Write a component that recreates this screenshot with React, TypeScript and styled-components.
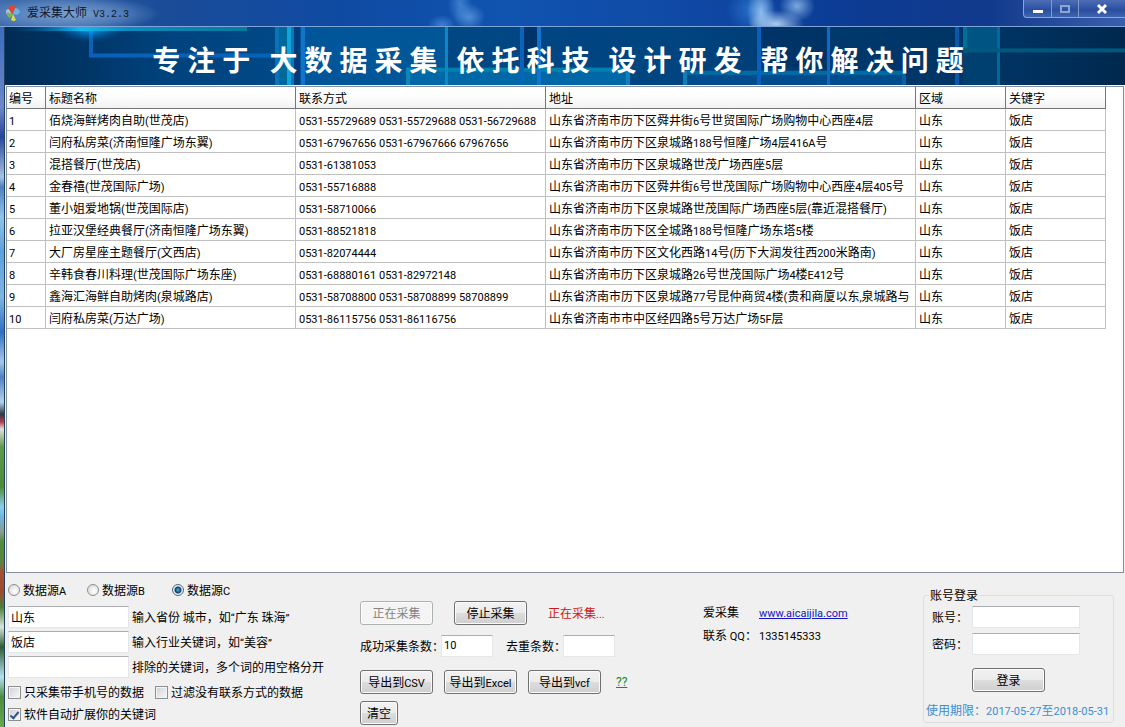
import React from "react";
import styled, { createGlobalStyle, css } from "styled-components";

const GlobalStyle = createGlobalStyle`
  *, *::before, *::after { box-sizing: border-box; }
  body { margin: 0; background: #f0f0f0; }
  body, button, input {
    font-family: "Noto Sans CJK SC", sans-serif;
    font-size: 12px;
    line-height: 18px;
    color: #000;
  }
`;

/* ---------- shared pieces ---------- */

const LatinRun = styled.span`
  font-family: Roboto, "Noto Sans CJK SC", sans-serif;
  font-size: 11px;
  line-height: 1;
`;

/* Sets digits and Latin letters in the smaller UI face, Chinese in the main one. */
function Mixed({ children }: { children: string }) {
  const runs = children.split(/([\x20-\x7e“”…]+)/).filter(Boolean);
  return (
    <>
      {runs.map((run, i) =>
        /^[\x20-\x7e“”…]/.test(run) ? <LatinRun key={i}>{run}</LatinRun> : run
      )}
    </>
  );
}

const Button = styled.button<{ $narrow?: boolean }>`
  width: ${(p) => (p.$narrow ? 38 : 73)}px;
  height: 24px;
  padding: 0;
  white-space: nowrap;
  border: 1px solid #707070;
  border-radius: 3px;
  box-shadow: inset 0 0 0 1px #fbfbfb;
  background: linear-gradient(#f2f2f2 0%, #ebebeb 49%, #dddddd 50%, #cfcfcf 100%);
  &:disabled {
    color: #838383;
    border-color: #adb2b5;
    background: #f4f4f4;
  }
`;

const TextBox = styled.input<{ $width: number }>`
  width: ${(p) => p.$width}px;
  height: 22px;
  padding: 0 2px 2px;
  background: #fff;
  border: 1px solid #e3e7ea;
  border-top-color: #abadb3;
  outline: none;
`;

const CountBox = styled(TextBox)`
  font-family: Roboto, sans-serif;
  font-size: 11px;
`;

/* ---------- title bar ---------- */

const Window = styled.div`
  display: flex;
  flex-direction: column;
  min-height: 100vh;
`;

const TitleBar = styled.header`
  display: flex;
  align-items: flex-start;
  justify-content: space-between;
  height: 27px;
  padding-left: 5px;
  border-bottom: 1px solid #7ea4d8;
  background:
    radial-gradient(ellipse 90px 18px at 70px 14px, rgba(150, 180, 220, 0.75), rgba(120, 160, 210, 0.5) 60%, transparent),
    radial-gradient(ellipse 12px 20px at 460px 4px, rgba(100, 165, 235, 0.55), transparent),
    radial-gradient(ellipse 16px 14px at 469px 17px, rgba(120, 180, 240, 0.6), transparent),
    radial-gradient(ellipse 14px 10px at 442px 25px, rgba(90, 160, 235, 0.6), transparent),
    radial-gradient(ellipse 28px 14px at 776px 24px, rgba(190, 220, 250, 0.9), transparent),
    radial-gradient(ellipse 14px 26px at 761px 12px, rgba(160, 205, 245, 0.85), transparent),
    radial-gradient(ellipse 18px 16px at 797px 6px, rgba(150, 195, 240, 0.8), transparent),
    radial-gradient(ellipse 26px 24px at 752px 10px, rgba(50, 130, 220, 0.7), transparent),
    linear-gradient(90deg, #3f6cab, #1b4c98 14%, #0f4aa2 30%, #1054b0 45%, #0f48a4 62%, #0c3c94 75%, #123a8c 88%, #3a5fae);
`;

const Caption = styled.h1`
  display: flex;
  align-items: center;
  gap: 6px;
  height: 26px;
  margin: 0;
  font-size: 12px;
  font-weight: 400;
  color: #0c1830;
`;

const Version = styled.span`
  font-family: "Liberation Mono", monospace;
  font-size: 10px;
`;

const WindowButtons = styled.div`
  display: flex;
  height: 18px;
  border: 1px solid #8ba5d6;
  border-width: 0 0 1px 1px;
  border-radius: 0 0 0 4px;
  background: linear-gradient(#4d6cb4, #2f54a4 50%, #274c9c 51%, #3f64b0);
`;

const WindowButton = styled.button<{ $wide?: boolean }>`
  display: grid;
  place-items: center;
  width: ${(p) => (p.$wide ? 47 : 27)}px;
  height: 17px;
  padding: 0;
  border: 0;
  background: none;
  & + & {
    border-left: 1px solid #7f99cc;
  }
`;

function AppIcon() {
  return (
    <svg width="16" height="18" viewBox="0 0 16 18" aria-hidden="true">
      <circle cx="4" cy="8" r="3" fill="#a9c3e0" />
      <circle cx="12" cy="11" r="4" fill="#4f86c8" />
      <path d="M7 10 L3 4 Q4 1 8 1 Q11 2 10 5 Z" fill="#d84a35" />
      <path d="M8 10 L10 4 Q14 4 15 8 Q14 10 12 11 Z" fill="#6fb1e0" />
      <path d="M8 10 L2 8 Q1 12 5 14 Z" fill="#7cb84c" />
      <path d="M8 10 L6 16 Q9 18 11 16 Z" fill="#e6d648" />
    </svg>
  );
}

/* ---------- banner ---------- */

const Client = styled.main`
  flex: 1;
  display: flex;
  flex-direction: column;
  border-left: 5px solid transparent;
  background:
    linear-gradient(#f0f0f0, #f0f0f0) padding-box,
    linear-gradient(90deg, transparent 4px, #22405f 4px, #22405f 5px, transparent 5px) border-box,
    linear-gradient(#3a6cc0 0, #6f86c8 80px, #27459c 110px, #a6c4e2 150px, #4d80c0 160px, #8fc4ea 190px, #5ea0dc 225px, #7fb4e4 270px, #2f6fc0 305px, #a8c8ea 335px, #4f80c4 350px, #b4d2ea 375px, #283c48 387px, #b83c48 395px, #e0e0e0 402px, #5f9a48 420px, #4c8c34 460px, #8ccdf0 480px, #6fb4e0 490px, #8a9c90 505px, #4f8c3c 515px, #5a8440 535px, #a85030 545px, #9c4a34 565px, #4c7c38 580px, #d8e4dc 600px, #2c5c30 620px, #b8e0ec 650px, #4c8c3c 670px, #6aa84c 100%) border-box;
`;

const Banner = styled.div`
  position: relative;
  height: 58px;
  overflow: hidden;
  background: #003a70;
`;

const BannerArt = styled.svg`
  position: absolute;
  inset: 0;
  width: 100%;
  height: 100%;
`;

const Slogan = styled.p`
  position: relative;
  display: flex;
  justify-content: center;
  gap: 19px;
  margin: 0;
  padding: 4px 14px 0 0;
  font-size: 28px;
  font-weight: 700;
  line-height: 57px;
  white-space: nowrap;
  color: #fff;
`;

const Phrase = styled.span`
  display: flex;
  gap: 7px;
`;

const slogan = ["专注于", "大数据采集", "依托科技", "设计研发", "帮你解决问题"];

function Artwork() {
  return (
    <BannerArt viewBox="0 0 1120 57" preserveAspectRatio="none" aria-hidden="true">
      <defs>
        <linearGradient id="base" x1="0" x2="1" y1="0" y2="0">
          <stop offset="0" stopColor="#002c55" />
          <stop offset="0.05" stopColor="#003260" />
          <stop offset="0.14" stopColor="#00427c" />
          <stop offset="0.25" stopColor="#004a88" />
          <stop offset="0.38" stopColor="#004884" />
          <stop offset="0.6" stopColor="#004480" />
          <stop offset="0.75" stopColor="#00386c" />
          <stop offset="0.9" stopColor="#003362" />
          <stop offset="1" stopColor="#00284e" />
        </linearGradient>
        <linearGradient id="topBar" x1="0" x2="1" y1="0" y2="0">
          <stop offset="0" stopColor="#0060b0" stopOpacity="0" />
          <stop offset="0.3" stopColor="#14b8f0" />
          <stop offset="0.5" stopColor="#0b8cc0" />
          <stop offset="1" stopColor="#067a9c" />
        </linearGradient>
        <radialGradient id="flare">
          <stop offset="0" stopColor="#2fe0ff" />
          <stop offset="0.3" stopColor="#0a9cf0" stopOpacity="0.7" />
          <stop offset="1" stopColor="#0060b0" stopOpacity="0" />
        </radialGradient>
      </defs>
      <rect width="1120" height="57" fill="url(#base)" />
      <rect x="273" width="169" height="57" fill="#005a9c" opacity="0.8" />
      <path d="M86 1V28H270" fill="none" stroke="#0a62b8" strokeWidth="4" />
      <ellipse cx="85" cy="1" rx="36" ry="14" fill="url(#flare)" />
      <rect x="5" width="237" height="4" fill="url(#topBar)" />
      <rect x="270" width="4" height="57" fill="#0b72b8" />
      <rect x="274" width="8" height="57" fill="#00699c" />
      <rect x="282" width="4" height="57" fill="#10a4dc" />
      <rect x="286" width="3" height="57" fill="#0a78b4" />
      <rect x="289" width="6" height="57" fill="#003c7c" />
      <rect x="296" width="4" height="57" fill="#1074cc" />
      <rect x="401" y="40" width="224" height="17" fill="#0068a6" />
      <rect x="401" y="40" width="224" height="4" fill="#0080ac" />
      <rect x="401" y="40" width="4" height="17" fill="#0a88b4" />
      <rect x="440" width="3" height="57" fill="#0c88c4" />
      <rect x="515" width="4" height="57" fill="#0a64bc" />
      <rect x="519" width="13" height="40" fill="#003468" />
      <rect x="532" width="4" height="57" fill="#1074d0" />
      <rect x="621" y="44" width="4" height="13" fill="#1080c0" />
      <rect x="678" y="43" width="222" height="14" fill="#004c8c" />
      <rect x="678" y="43" width="222" height="4" fill="#006ca4" />
      <rect x="678" y="43" width="4" height="14" fill="#0c80b8" />
      <rect x="752" width="4" height="57" fill="#0a60bc" />
      <rect x="756" width="65" height="40" fill="#002c5c" opacity="0.5" />
      <rect x="822" width="3" height="57" fill="#1068c4" />
      <rect x="897" y="47" width="4" height="10" fill="#0c60a0" />
      <rect x="950" width="4" height="57" fill="#0858ac" />
      <rect x="958" width="37" height="25" fill="#005484" />
      <rect x="958" y="25" width="37" height="32" fill="#004070" />
      <rect x="958" width="4" height="25" fill="#007098" />
      <rect x="992" width="3" height="57" fill="#006a9c" />
      <rect x="958" y="21" width="162" height="4" fill="#00587c" />
    </BannerArt>
  );
}

/* ---------- results list ---------- */

const ResultList = styled.section`
  flex: 1;
  margin: 1px 1px 0;
  border: 1px solid #828f9f;
  background: #fff;
  box-shadow: 0 -1px 0 #fff;
  overflow: hidden;
`;

const Table = styled.table`
  table-layout: fixed;
  width: 1099px;
  border-collapse: separate;
  border-spacing: 0;
`;

const cell = css`
  height: 22px;
  padding: 0 0 0 3px;
  line-height: 18px;
  text-align: left;
  font-weight: 400;
  white-space: nowrap;
  overflow: hidden;
  border: 0 solid #c0c0c0;
  border-width: 0 1px 1px 0;
  &:first-child {
    padding-left: 2px;
  }
`;

const HeadCell = styled.th`
  ${cell}
  border-color: #767676;
  background: linear-gradient(#fff, #fdfdfd 50%, #f1f1f1);
`;

const Cell = styled.td`
  ${cell}
`;

const columns = [
  { title: "编号", width: 39 },
  { title: "标题名称", width: 250 },
  { title: "联系方式", width: 250 },
  { title: "地址", width: 370 },
  { title: "区域", width: 90 },
  { title: "关键字", width: 100 },
];

const records = [
  ["佰烧海鲜烤肉自助(世茂店)", "0531-55729689 0531-55729688 0531-56729688", "山东省济南市历下区舜井街6号世贸国际广场购物中心西座4层"],
  ["闫府私房菜(济南恒隆广场东翼)", "0531-67967656 0531-67967666 67967656", "山东省济南市历下区泉城路188号恒隆广场4层416A号"],
  ["混搭餐厅(世茂店)", "0531-61381053", "山东省济南市历下区泉城路世茂广场西座5层"],
  ["金春禧(世茂国际广场)", "0531-55716888", "山东省济南市历下区舜井街6号世茂国际广场购物中心西座4层405号"],
  ["董小姐爱地锅(世茂国际店)", "0531-58710066", "山东省济南市历下区泉城路世茂国际广场西座5层(靠近混搭餐厅)"],
  ["拉亚汉堡经典餐厅(济南恒隆广场东翼)", "0531-88521818", "山东省济南市历下区全城路188号恒隆广场东塔5楼"],
  ["大厂房星座主题餐厅(文西店)", "0531-82074444", "山东省济南市历下区文化西路14号(历下大润发往西200米路南)"],
  ["辛韩食春川料理(世茂国际广场东座)", "0531-68880161 0531-82972148", "山东省济南市历下区泉城路26号世茂国际广场4楼E412号"],
  ["鑫海汇海鲜自助烤肉(泉城路店)", "0531-58708800 0531-58708899 58708899", "山东省济南市历下区泉城路77号昆仲商贸4楼(贵和商厦以东,泉城路与"],
  ["闫府私房菜(万达广场)", "0531-86115756 0531-86116756", "山东省济南市市中区经四路5号万达广场5F层"],
];

/* ---------- control panel ---------- */

const Panel = styled.section`
  display: grid;
  grid-template-columns: 352px 343px 1fr 191px;
  min-height: 154px;
  padding: 0 11px 2px 3px;
  white-space: nowrap;
`;

const SourceForm = styled.div`
  display: flex;
  flex-direction: column;
  gap: 3px;
  padding-top: 6px;
`;

const Sources = styled.div`
  display: grid;
  grid-template-columns: 79px 85px auto;
  height: 24px;
`;

const Choice = styled.label`
  display: flex;
  align-items: center;
  gap: 3px;
  height: 22px;
`;

const Radio = styled.input`
  appearance: none;
  width: 12px;
  height: 12px;
  margin: 0;
  border: 1px solid #8e8f8f;
  border-radius: 50%;
  background: radial-gradient(circle at 60% 60%, #fff, #d4d4d4);
  &:checked {
    border-color: #4a6a84;
    background: radial-gradient(circle, #4cb4e0 0, #163c5c 3px, #e4eef4 4px);
  }
`;

const Check = styled.input`
  appearance: none;
  display: grid;
  place-items: center;
  width: 13px;
  height: 13px;
  margin: 0;
  border: 1px solid #8e8f8f;
  background: linear-gradient(135deg, #cfd3d6, #f8f8f8);
  box-shadow: inset 0 0 0 1px #f4f4f4;
  &:checked::after {
    content: "";
    width: 5px;
    height: 9px;
    border: solid #33508c;
    border-width: 0 2px 2px 0;
    transform: rotate(40deg);
  }
`;

const Field = styled.label`
  display: flex;
  flex-direction: row-reverse;
  justify-content: flex-end;
  align-items: center;
  gap: 3px;
`;

const CheckRow = styled.div`
  display: flex;
  gap: 11px;
`;

const Actions = styled.div`
  display: grid;
  grid-template-rows: 34px 35px 31px 24px;
  padding-top: 28px;
`;

const ActionRow = styled.div<{ $gap?: number }>`
  display: flex;
  align-items: center;
  align-self: start;
  gap: ${(p) => p.$gap ?? 0}px;
`;

const Status = styled.output`
  color: #d01818;
`;

const Count = styled.label`
  display: flex;
  align-items: center;
`;

/* The full-width colon carries blank space on its right, so the box tucks into it. */
const CountLabel = styled.span`
  margin-right: -3px;
`;

const HelpLink = styled.a`
  padding-left: 4px;
  font-family: Roboto, sans-serif;
  color: #1f8a1f;
`;

const Contact = styled.dl`
  display: grid;
  grid-template-columns: 56px auto;
  grid-auto-rows: 23px;
  align-content: start;
  align-items: center;
  margin: 0;
  padding-top: 27px;
`;

const Term = styled.dt``;

const Detail = styled.dd`
  margin: 0;
  a {
    color: #1414c8;
  }
`;

const Login = styled.fieldset`
  align-self: start;
  display: flex;
  flex-direction: column;
  min-width: 0;
  margin: 13px 0 0;
  padding: 2px 2px 3px;
  border: 1px solid #dcdfe1;
  border-radius: 3px;
`;

const Legend = styled.legend`
  margin-left: 3px;
  padding: 0 1px;
`;

const LoginRows = styled.div`
  display: grid;
  grid-template-columns: 40px auto;
  grid-template-rows: 22px 22px;
  row-gap: 5px;
  align-items: center;
  padding-left: 6px;
`;

const Submit = styled.div`
  padding: 13px 0 9px 46px;
`;

const Expiry = styled.p`
  margin: 0;
  color: #3c8ed0;
`;

export default function App() {
  return (
    <>
      <GlobalStyle />
      <Window>
        <TitleBar>
          <Caption>
            <AppIcon />
            <span>
              爱采集大师<Version> V3.2.3</Version>
            </span>
          </Caption>
          <WindowButtons>
            <WindowButton aria-label="最小化">
              <svg width="12" height="12" viewBox="0 0 12 12">
                <rect x="1" y="7" width="10" height="3" fill="#fff" />
              </svg>
            </WindowButton>
            <WindowButton aria-label="最大化">
              <svg width="12" height="12" viewBox="0 0 12 12">
                <rect x="2" y="3" width="8" height="6" fill="none" stroke="#8fa6d4" strokeWidth="2" />
              </svg>
            </WindowButton>
            <WindowButton $wide aria-label="关闭">
              <svg width="12" height="12" viewBox="0 0 12 12">
                <path d="M2 2L10 10M10 2L2 10" stroke="#fff" strokeWidth="3" />
              </svg>
            </WindowButton>
          </WindowButtons>
        </TitleBar>

        <Client>
          <Banner>
            <Artwork />
            <Slogan>
              {slogan.map((phrase) => (
                <Phrase key={phrase}>
                  {[...phrase].map((ch) => (
                    <span key={ch}>{ch}</span>
                  ))}
                </Phrase>
              ))}
            </Slogan>
          </Banner>

          <ResultList>
            <Table>
              <colgroup>
                {columns.map((c) => (
                  <col key={c.title} width={c.width} />
                ))}
              </colgroup>
              <thead>
                <tr>
                  {columns.map((c) => (
                    <HeadCell key={c.title} scope="col">
                      {c.title}
                    </HeadCell>
                  ))}
                </tr>
              </thead>
              <tbody>
                {records.map((record, i) => (
                  <tr key={i}>
                    {[String(i + 1), ...record, "山东", "饭店"].map((value, j) => (
                      <Cell key={j}>
                        <Mixed>{value}</Mixed>
                      </Cell>
                    ))}
                  </tr>
                ))}
              </tbody>
            </Table>
          </ResultList>

          <Panel>
            <SourceForm>
              <Sources>
                {["A", "B", "C"].map((name) => (
                  <Choice key={name}>
                    <Radio type="radio" name="source" defaultChecked={name === "C"} />
                    <span>
                      <Mixed>{`数据源${name}`}</Mixed>
                    </span>
                  </Choice>
                ))}
              </Sources>
              <Field>
                <span>
                  <Mixed>输入省份 城市，如“广东 珠海”</Mixed>
                </span>
                <TextBox $width={121} defaultValue="山东" />
              </Field>
              <Field>
                <span>
                  <Mixed>输入行业关键词，如“美容”</Mixed>
                </span>
                <TextBox $width={121} defaultValue="饭店" />
              </Field>
              <Field>
                <span>排除的关键词，多个词的用空格分开</span>
                <TextBox $width={121} />
              </Field>
              <div>
                <CheckRow>
                  <Choice>
                    <Check type="checkbox" />
                    只采集带手机号的数据
                  </Choice>
                  <Choice>
                    <Check type="checkbox" />
                    过滤没有联系方式的数据
                  </Choice>
                </CheckRow>
                <CheckRow>
                  <Choice>
                    <Check type="checkbox" defaultChecked />
                    软件自动扩展你的关键词
                  </Choice>
                </CheckRow>
              </div>
            </SourceForm>

            <Actions>
              <ActionRow $gap={21}>
                <Button disabled>正在采集</Button>
                <Button>停止采集</Button>
                <Status>
                  <Mixed>正在采集...</Mixed>
                </Status>
              </ActionRow>
              <ActionRow $gap={13}>
                <Count>
                  <CountLabel>成功采集条数：</CountLabel>
                  <CountBox $width={52} defaultValue="10" />
                </Count>
                <Count>
                  <CountLabel>去重条数：</CountLabel>
                  <CountBox $width={52} />
                </Count>
              </ActionRow>
              <ActionRow $gap={11}>
                <Button>
                  <Mixed>导出到CSV</Mixed>
                </Button>
                <Button>
                  <Mixed>导出到Excel</Mixed>
                </Button>
                <Button>
                  <Mixed>导出到vcf</Mixed>
                </Button>
                <HelpLink href="#help">??</HelpLink>
              </ActionRow>
              <ActionRow>
                <Button $narrow>清空</Button>
              </ActionRow>
            </Actions>

            <Contact>
              <Term>爱采集</Term>
              <Detail>
                <a href="#site">
                  <Mixed>www.aicaijila.com</Mixed>
                </a>
              </Detail>
              <Term>
                <Mixed>联系 QQ：</Mixed>
              </Term>
              <Detail>
                <Mixed>1335145333</Mixed>
              </Detail>
            </Contact>

            <Login>
              <Legend>账号登录</Legend>
              <LoginRows>
                <label htmlFor="account">账号：</label>
                <TextBox id="account" $width={108} />
                <label htmlFor="password">密码：</label>
                <TextBox id="password" type="password" $width={108} />
              </LoginRows>
              <Submit>
                <Button>登录</Button>
              </Submit>
              <Expiry>
                <Mixed>使用期限：2017-05-27至2018-05-31</Mixed>
              </Expiry>
            </Login>
          </Panel>
        </Client>
      </Window>
    </>
  );
}
